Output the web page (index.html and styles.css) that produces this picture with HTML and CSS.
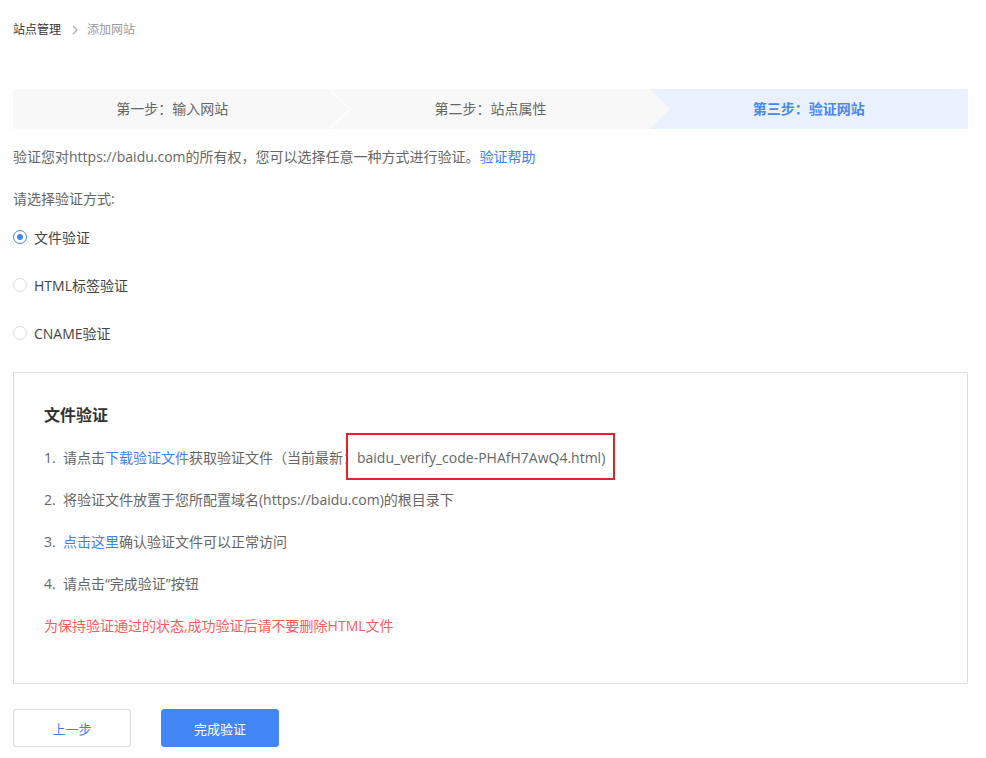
FILE: index.html
```html
<!DOCTYPE html>
<html lang="zh">
<head>
<meta charset="utf-8">
<title>添加网站</title>
<link rel="stylesheet" href="styles.css">
</head>
<body>
<div class="page">
  <div class="crumb">
    <span class="crumb-home">站点管理</span>
    <svg class="crumb-sep" width="8" height="10" viewBox="0 0 8 10"><path d="M2 1l4 4-4 4" fill="none" stroke="#aaa" stroke-width="1.2"/></svg>
    <span class="crumb-cur">添加网站</span>
  </div>

  <div class="steps">
    <div class="step step-1">第一步：输入网站
      <svg class="chev" width="24" height="40" viewBox="0 0 24 40"><path d="M0 0L21 20L0 40" fill="none" stroke="#fff" stroke-width="1.6"/></svg>
    </div>
    <div class="step step-2">第二步：站点属性</div>
    <div class="step step-3">第三步：验证网站</div>
  </div>

  <p class="intro">验证您对https://baidu.com的所有权，您可以选择任意一种方式进行验证。<a class="link">验证帮助</a></p>
  <p class="label">请选择验证方式:</p>

  <div class="radios">
    <div class="radio-row"><span class="radio checked"></span><span>文件验证</span></div>
    <div class="radio-row"><span class="radio"></span><span>HTML标签验证</span></div>
    <div class="radio-row"><span class="radio"></span><span>CNAME验证</span></div>
  </div>

  <div class="box">
    <h3 class="box-title">文件验证</h3>
    <p class="item">1.&nbsp; 请点击<a class="link">下载验证文件</a>获取验证文件（当前最新：baidu_verify_code-PHAfH7AwQ4.html)</p>
    <p class="item">2.&nbsp; 将验证文件放置于您所配置域名(https://baidu.com)的根目录下</p>
    <p class="item">3.&nbsp; <a class="link">点击这里</a>确认验证文件可以正常访问</p>
    <p class="item">4.&nbsp; 请点击“完成验证”按钮</p>
    <p class="item warn">为保持验证通过的状态,成功验证后请不要删除HTML文件</p>
    <div class="mark"></div>
  </div>

  <div class="actions">
    <button class="btn btn-prev">上一步</button>
    <button class="btn btn-done">完成验证</button>
  </div>
</div>
</body>
</html>
```

FILE: styles.css
```css
* { box-sizing: border-box; }
html, body { margin: 0; padding: 0; background: #fff; }
body {
  font-family: "Open Sans", "Noto Sans CJK SC", sans-serif;
  color: #666;
  font-size: 14px;
}
p { margin: 0; }
.page { padding: 0 18px 0 13px; width: 986px; }

.crumb {
  margin-top: 20px;
  height: 20px;
  line-height: 20px;
  font-size: 12px;
  display: flex;
  align-items: center;
}
.crumb-home { color: #333; }
.crumb-sep { margin: 0 8px 0 10px; }
.crumb-cur { color: #999; }

.steps {
  margin-top: 49px;
  display: flex;
  height: 40px;
  background: #f8f8f8;
}
.step {
  flex: 1;
  position: relative;
  text-align: center;
  line-height: 40px;
  font-size: 14px;
  color: #666;
}
.chev { position: absolute; right: -22px; top: 0; }
.step-3 {
  background: #eaf1fe;
  color: #4a86f5;
  font-weight: bold;
  clip-path: polygon(0 0, 100% 0, 100% 100%, 0 100%, 20px 50%);
}

.link { color: #3f80f5; text-decoration: none; cursor: pointer; }
.intro { margin-top: 18px; line-height: 20px; }
.label { margin-top: 22px; line-height: 20px; }

.radios { display: flex; flex-direction: column; gap: 28px; margin-top: 18px; }
.radio-row { display: flex; align-items: center; height: 20px; gap: 7px; color: #444; }
.radio {
  width: 14px; height: 14px;
  border: 1px solid #dcdcdc;
  border-radius: 50%;
  display: inline-flex;
  align-items: center;
  justify-content: center;
}
.radio.checked { border-color: #4285f4; }
.radio.checked::after {
  content: "";
  width: 6px; height: 6px;
  border-radius: 50%;
  background: #4285f4;
}

.box {
  position: relative;
  margin-top: 29px;
  border: 1px solid #dddddd;
  padding: 30px 30px 47px;
  display: flex;
  flex-direction: column;
  gap: 22px;
}
.box-title {
  margin: 0 0 -1px;
  font-size: 16px;
  line-height: 24px;
  color: #333;
  font-weight: bold;
}
.item { line-height: 20px; color: #666; }
.warn { color: #ff5a5a; }
.mark {
  position: absolute;
  left: 332px; top: 60px;
  width: 269px; height: 47px;
  border: 2px solid #e8202e;
}

.actions { display: flex; gap: 30px; margin-top: 25px; }
.btn {
  width: 118px; height: 38px;
  border-radius: 3px;
  font-family: inherit;
  font-size: 13px;
}
.btn-prev { background: #fff; border: 1px solid #dddddd; color: #3f80f5; }
.btn-done { background: #4285f4; border: 1px solid #4285f4; color: #fff; }
```
